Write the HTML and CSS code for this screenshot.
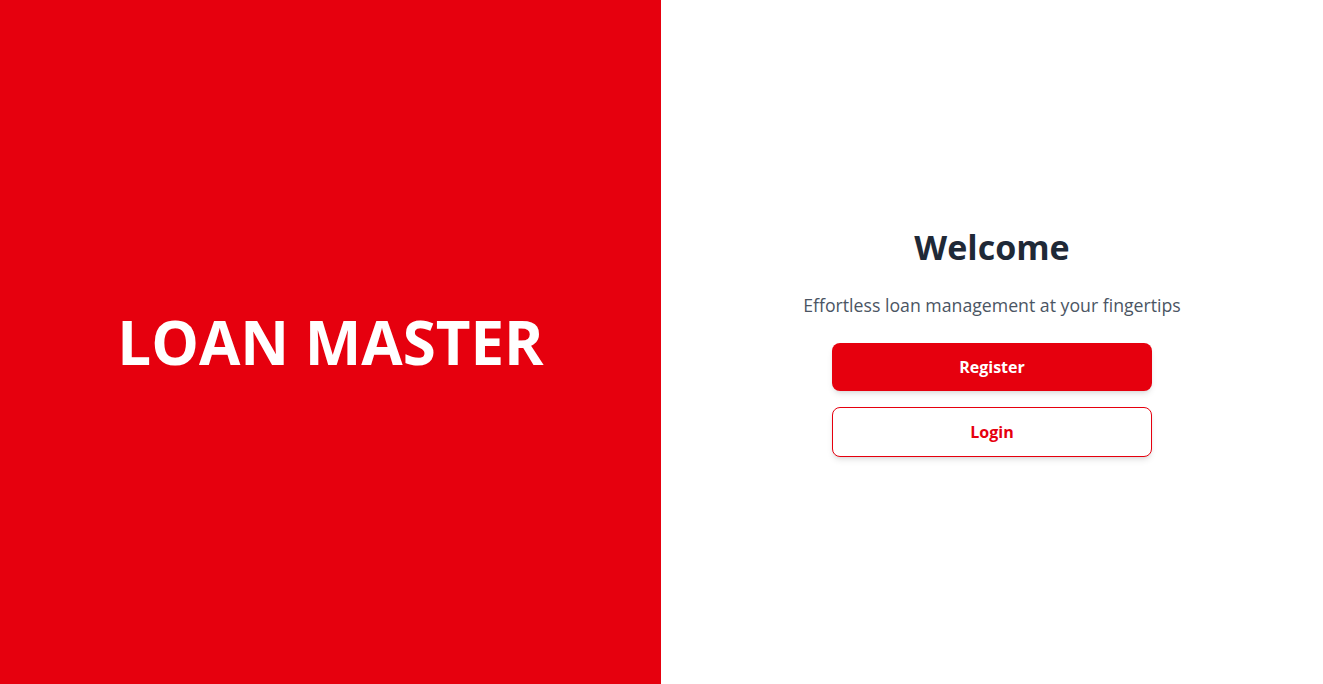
FILE: index.html
```html
<!DOCTYPE html>
<html lang="en">
<head>
<meta charset="utf-8">
<title>Loan Master</title>
<link rel="stylesheet" href="styles.css">
</head>
<body>
<div class="page">
  <section class="brand">
    <h1 class="brand-title">LOAN MASTER</h1>
  </section>
  <section class="welcome">
    <div class="welcome-box">
      <h2 class="welcome-title">Welcome</h2>
      <p class="welcome-sub">Effortless loan management at your fingertips</p>
      <button class="btn btn-primary">Register</button>
      <button class="btn btn-outline">Login</button>
    </div>
  </section>
</div>
</body>
</html>
```
FILE: styles.css
```css
* { box-sizing: border-box; }
html, body { margin: 0; padding: 0; height: 100%; }
body {
  font-family: "Open Sans", "Noto Sans", sans-serif;
  background: #ffffff;
}
.page {
  display: flex;
  height: 684px;
}
.brand {
  width: 661px;
  background: #e6000e;
  display: flex;
  align-items: center;
  justify-content: center;
}
.brand-title {
  margin: 0;
  color: #ffffff;
  font-size: 60px;
  font-weight: 700;
  line-height: 1;
  letter-spacing: 0;
}
.welcome {
  flex: 1;
  display: flex;
  align-items: center;
  justify-content: center;
}
.welcome-box {
  display: flex;
  flex-direction: column;
  align-items: center;
}
.welcome-title {
  margin: 0 0 24px;
  font-size: 34px;
  line-height: 40px;
  font-weight: 700;
  color: #1f2937;
}
.welcome-sub {
  margin: 0 0 24px;
  font-size: 17.7px;
  line-height: 28px;
  color: #4b5563;
}
.btn {
  width: 320px;
  font-family: inherit;
  font-size: 16px;
  font-weight: 700;
  border-radius: 8px;
  cursor: pointer;
  box-shadow: 0 4px 6px -1px rgba(0,0,0,0.1), 0 2px 4px -2px rgba(0,0,0,0.1);
}
.btn-primary {
  height: 48px;
  background: #e6000e;
  color: #ffffff;
  border: none;
  margin-bottom: 16px;
}
.btn-outline {
  height: 50px;
  background: #ffffff;
  color: #e6000e;
  border: 1px solid #e6000e;
}
```
